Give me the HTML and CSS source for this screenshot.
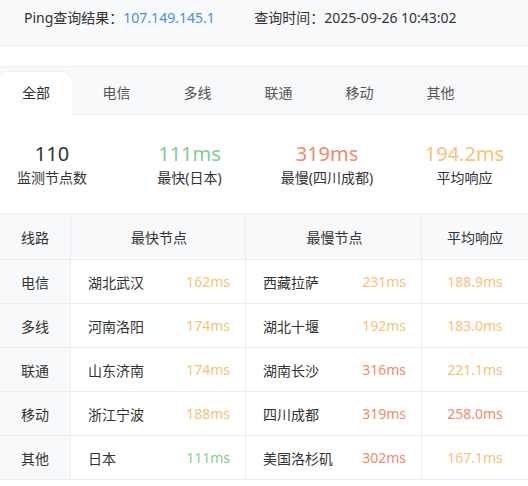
FILE: index.html
```html
<!DOCTYPE html>
<html lang="zh">
<head>
<meta charset="utf-8">
<link rel="stylesheet" href="styles.css">
</head>
<body>
<div class="page">
  <header class="summary">
    <span class="lbl">Ping查询结果：</span><span class="ip">107.149.145.1</span>
    <span class="lbl time-lbl">查询时间：</span><span class="time">2025-09-26 10:43:02</span>
  </header>
  <div class="spacer"></div>
  <nav class="tabs">
    <div class="tab active">全部</div>
    <div class="tab">电信</div>
    <div class="tab">多线</div>
    <div class="tab">联通</div>
    <div class="tab">移动</div>
    <div class="tab">其他</div>
  </nav>
  <section class="stats">
    <div class="stat"><div class="num dark">110</div><div class="cap">监测节点数</div></div>
    <div class="stat"><div class="num green">111ms</div><div class="cap">最快(日本)</div></div>
    <div class="stat"><div class="num red">319ms</div><div class="cap">最慢(四川成都)</div></div>
    <div class="stat"><div class="num yellow">194.2ms</div><div class="cap">平均响应</div></div>
  </section>
  <div class="table">
    <div class="row head">
      <div class="c line">线路</div>
      <div class="c node center">最快节点</div>
      <div class="c node center">最慢节点</div>
      <div class="c avg">平均响应</div>
    </div>
    <div class="row">
      <div class="c line">电信</div>
      <div class="c node"><span>湖北武汉</span><span class="yellow">162ms</span></div>
      <div class="c node"><span>西藏拉萨</span><span class="yellow">231ms</span></div>
      <div class="c avg yellow">188.9ms</div>
    </div>
    <div class="row">
      <div class="c line">多线</div>
      <div class="c node"><span>河南洛阳</span><span class="yellow">174ms</span></div>
      <div class="c node"><span>湖北十堰</span><span class="yellow">192ms</span></div>
      <div class="c avg yellow">183.0ms</div>
    </div>
    <div class="row">
      <div class="c line">联通</div>
      <div class="c node"><span>山东济南</span><span class="yellow">174ms</span></div>
      <div class="c node"><span>湖南长沙</span><span class="red">316ms</span></div>
      <div class="c avg yellow">221.1ms</div>
    </div>
    <div class="row">
      <div class="c line">移动</div>
      <div class="c node"><span>浙江宁波</span><span class="yellow">188ms</span></div>
      <div class="c node"><span>四川成都</span><span class="red">319ms</span></div>
      <div class="c avg red">258.0ms</div>
    </div>
    <div class="row">
      <div class="c line">其他</div>
      <div class="c node"><span>日本</span><span class="green">111ms</span></div>
      <div class="c node"><span>美国洛杉矶</span><span class="red">302ms</span></div>
      <div class="c avg yellow">167.1ms</div>
    </div>
  </div>
</div>
</body>
</html>
```
FILE: styles.css
```css
html, body {
  margin: 0;
  padding: 0;
  background: #fff;
}
body {
  font-family: "Noto Sans", "Noto Sans CJK SC", sans-serif;
  font-size: 14px;
  color: #333;
  width: 528px;
  overflow: hidden;
}
.summary {
  box-sizing: border-box;
  height: 46px;
  padding: 8px 0 0 24px;
  background: #f8f9fb;
  border-bottom: 1px solid #ebedf0;
  line-height: 20px;
  white-space: nowrap;
}
.ip { color: #4a90e2; }
.time-lbl { margin-left: 36px; }
.spacer { height: 20px; }
.tabs {
  display: flex;
  align-items: flex-end;
  box-sizing: border-box;
  height: 49px;
  background: #f8f9fb;
  border-top: 1px solid #ebedf0;
  border-bottom: 1px solid #eef0f3;
}
.tab {
  width: 81px;
  height: 42px;
  line-height: 42px;
  text-align: center;
  color: #555;
  box-sizing: border-box;
}
.tab.active {
  width: 72px;
  background: #fff;
  color: #333;
  border-radius: 6px 10px 0 0;
  margin-bottom: -1px;
  height: 43px;
  line-height: 42px;
  box-shadow: 0 -1px 0 #eef0f3;
}
.tab:nth-child(2) { width: 85px; padding-left: 4px; }
.stats {
  display: grid;
  grid-template-columns: repeat(4, 104px);
  column-gap: 33.5px;
  height: 99px;
  padding-top: 25px;
  box-sizing: border-box;
  text-align: center;
}
.num { font-size: 20px; line-height: 28px; }
.cap { line-height: 20px; }
.dark { color: #333; }
.green { color: #7fcf8b; }
.red { color: #ef8b6b; }
.yellow { color: #f5c475; }
.table {
  border-top: 1px solid #ebedf0;
}
.row {
  display: grid;
  grid-template-columns: 71px 175px 176px 106px;
  height: 43px;
  border-bottom: 1px solid #ebedf0;
}
.row.head { height: 44px; background: #f8f9fb; }
.c {
  display: flex;
  align-items: center;
  border-right: 1px solid #ebedf0;
}
.c:last-child { border-right: none; }
.line { justify-content: center; background: #f8f9fb; }
.node {
  justify-content: space-between;
  padding: 0 15px 0 17px;
}
.node.center { justify-content: center; }
.avg { justify-content: center; }
```
